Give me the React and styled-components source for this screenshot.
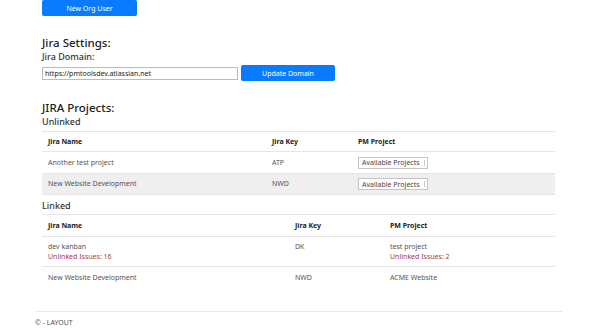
import styled, { createGlobalStyle } from "styled-components";

const GlobalStyle = createGlobalStyle`
  body {
    margin: 0;
    background: #fff;
    font-family: "Noto Sans", "Open Sans", sans-serif;
    color: #555;
  }
`;

const Page = styled.div`
  width: 600px;
  height: 330px;
  overflow: hidden;
`;

const Main = styled.main`
  padding: 0 45px 0 42px;
`;

const PrimaryButton = styled.button`
  display: block;
  width: ${(p) => p.width}px;
  height: 16px;
  padding: 0;
  border: none;
  border-radius: 2px;
  background: #0a7bff;
  color: #fff;
  font-family: inherit;
  font-size: 7px;
`;

const SectionTitle = styled.h3`
  margin: ${(p) => p.top}px 0 0;
  font-size: 11.5px;
  font-weight: 500;
  line-height: 14px;
  color: #222;
`;

const SubTitle = styled.h4`
  margin: ${(p) => p.top || 0}px 0 0;
  font-size: 9px;
  font-weight: 500;
  line-height: 14px;
  color: #333;
`;

const DomainRow = styled.div`
  display: flex;
  align-items: center;
  gap: 3px;
  margin-top: 1px;
`;

const DomainInput = styled.input`
  box-sizing: border-box;
  width: 196px;
  height: 13px;
  padding: 0 2px;
  border: 1px solid #bbb;
  font-family: inherit;
  font-size: 7px;
  color: #222;
`;

const Table = styled.div`
  margin-top: ${(p) => p.top}px;
  width: 513px;
  border-top: 1px solid #e6e6e6;
`;

const Row = styled.div`
  display: grid;
  grid-template-columns: ${(p) => p.cols};
  align-items: center;
  box-sizing: border-box;
  min-height: ${(p) => p.h}px;
  padding: 0 6px;
  border-bottom: ${(p) => (p.last ? "none" : "1px solid #e6e6e6")};
  background: ${(p) => (p.shade ? "#efefef" : "transparent")};
  font-size: 7px;
  color: ${(p) => (p.head ? "#222" : "#555")};
  font-weight: ${(p) => (p.head ? 700 : 400)};
`;

const Cell = styled.div`
  line-height: 10px;
  align-self: ${(p) => (p.top ? "start" : "center")};
  padding-top: ${(p) => (p.top ? 5 : 0)}px;
`;

const Warn = styled.div`
  color: #a5403b;
`;

const Select = styled.div`
  box-sizing: border-box;
  display: flex;
  align-items: center;
  justify-content: space-between;
  width: 70px;
  height: 12px;
  padding: 0 2px 0 3px;
  border: 1px solid #c4c4c4;
  background: #fff;
  color: #444;
  font-size: 7px;
  &::after {
    content: "";
    width: 1px;
    height: 6px;
    background: #ccc;
  }
`;

const Footer = styled.footer`
  margin: 22px 38px 0 35px;
  border-top: 1px solid #e8e8e8;
  padding-top: 6px;
  font-size: 7px;
  line-height: 10px;
  color: #555;
`;

const unlinkedCols = "224px 86px 1fr";
const linkedCols = "247px 95px 1fr";

export default function App() {
  return (
    <Page>
      <GlobalStyle />
      <Main>
        <PrimaryButton width={95}>New Org User</PrimaryButton>

        <SectionTitle top={20}>Jira Settings:</SectionTitle>
        <SubTitle>Jira Domain:</SubTitle>
        <DomainRow>
          <DomainInput defaultValue="https://pmtoolsdev.atlassian.net" />
          <PrimaryButton width={94}>Update Domain</PrimaryButton>
        </DomainRow>

        <SectionTitle top={20}>JIRA Projects:</SectionTitle>
        <SubTitle>Unlinked</SubTitle>
        <Table top={2}>
          <Row cols={unlinkedCols} h={20} head>
            <Cell>Jira Name</Cell>
            <Cell>Jira Key</Cell>
            <Cell>PM Project</Cell>
          </Row>
          <Row cols={unlinkedCols} h={22}>
            <Cell>Another test project</Cell>
            <Cell>ATP</Cell>
            <Select>Available Projects</Select>
          </Row>
          <Row cols={unlinkedCols} h={21} shade>
            <Cell>New Website Development</Cell>
            <Cell>NWD</Cell>
            <Select>Available Projects</Select>
          </Row>
        </Table>

        <SubTitle top={4}>Linked</SubTitle>
        <Table top={1}>
          <Row cols={linkedCols} h={22} head>
            <Cell>Jira Name</Cell>
            <Cell>Jira Key</Cell>
            <Cell>PM Project</Cell>
          </Row>
          <Row cols={linkedCols} h={30}>
            <Cell>
              dev kanban
              <Warn>Unlinked Issues: 16</Warn>
            </Cell>
            <Cell top>DK</Cell>
            <Cell>
              test project
              <Warn>Unlinked Issues: 2</Warn>
            </Cell>
          </Row>
          <Row cols={linkedCols} h={22} last>
            <Cell>New Website Development</Cell>
            <Cell>NWD</Cell>
            <Cell>ACME Website</Cell>
          </Row>
        </Table>
      </Main>
      <Footer>© - LAYOUT</Footer>
    </Page>
  );
}
